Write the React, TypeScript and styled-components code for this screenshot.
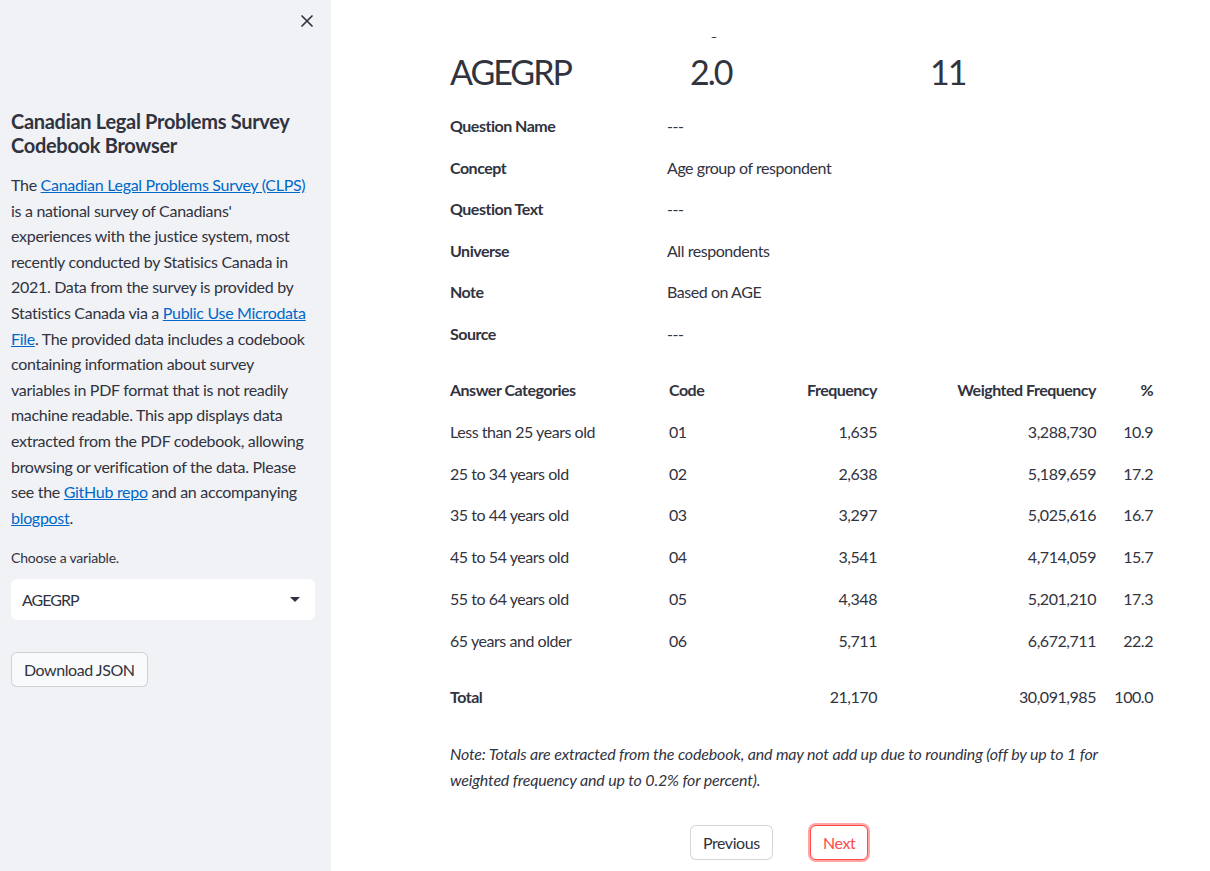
import React from "react";
import styled, { createGlobalStyle } from "styled-components";

const font = `"Lato", "Noto Sans", sans-serif`;

const GlobalStyle = createGlobalStyle`
  html, body {
    margin: 0;
    padding: 0;
    height: 100%;
    overflow: hidden;
  }
  body {
    font-family: ${font};
    color: #31333f;
    background: #ffffff;
  }
  * { box-sizing: border-box; }
`;

const Page = styled.div`
  display: flex;
  width: 1210px;
  height: 871px;
  overflow: hidden;
`;

const Sidebar = styled.aside`
  width: 331px;
  flex-shrink: 0;
  background: #f0f2f6;
  padding: 0 16px 0 11px;
  display: flex;
  flex-direction: column;
  letter-spacing: -0.3px;
`;

const CloseRow = styled.div`
  height: 42px;
  display: flex;
  align-items: center;
  justify-content: flex-end;
  margin-right: -4px;
`;

const CloseButton = styled.button`
  width: 24px;
  height: 24px;
  border: none;
  background: transparent;
  padding: 0;
  display: flex;
  align-items: center;
  justify-content: center;
  color: #31333f;
  cursor: pointer;
`;

const SideTitle = styled.h2`
  margin: 67px 0 0;
  font-size: 20px;
  line-height: 24px;
  font-weight: 700;
  letter-spacing: -0.3px;
`;

const SideText = styled.p`
  margin: 15px 0 0;
  font-size: 16px;
  line-height: 25.6px;
  white-space: nowrap;
`;

const Link = styled.a`
  color: #0068c9;
  text-decoration: underline;
`;

const FieldLabel = styled.label`
  display: block;
  margin-top: 17px;
  font-size: 14px;
  line-height: 22.4px;
  letter-spacing: -0.2px;
`;

const Select = styled.div`
  margin-top: 9px;
  height: 41px;
  background: #ffffff;
  border-radius: 6px;
  display: flex;
  align-items: center;
  justify-content: space-between;
  padding: 0 8px 0 11px;
  font-size: 16px;
  letter-spacing: -1px;
`;

const Button = styled.button<{ $primary?: boolean; $soft?: boolean }>`
  height: 35px;
  padding: 0 12px;
  font-family: ${font};
  font-size: 16px;
  letter-spacing: -0.45px;
  border-radius: 6px;
  cursor: pointer;
  justify-self: start;
  align-self: flex-start;
  background: ${(p) => (p.$soft ? "#f9fafb" : "#ffffff")};
  color: ${(p) => (p.$primary ? "#ff4b4b" : "#31333f")};
  border: 1px solid ${(p) => (p.$primary ? "#ff4b4b" : "rgba(49, 51, 63, 0.2)")};
  box-shadow: ${(p) => (p.$primary ? "0 0 0 2px rgba(255, 75, 75, 0.5)" : "none")};
`;

const DownloadWrap = styled.div`
  margin-top: 32px;
`;

const Main = styled.main`
  flex: 1;
  display: flex;
  flex-direction: column;
  background: #ffffff;
  overflow: hidden;
`;

const TopBar = styled.header`
  height: 37px;
  flex-shrink: 0;
  background: #ffffff;
`;

const Viewport = styled.div`
  flex: 1;
  overflow: hidden;
  padding: 0 56px 0 119px;
`;

const Content = styled.div`
  width: 704px;
  margin-top: -17px;
  letter-spacing: -0.45px;
`;

const Metrics = styled.div`
  display: grid;
  grid-template-columns: repeat(3, 1fr);
  column-gap: 16px;
`;

const MetricLabel = styled.div`
  font-size: 14px;
  line-height: 22.4px;
`;

const MetricValue = styled.div`
  margin-top: 1px;
  font-size: 34px;
  line-height: 57.6px;
  letter-spacing: -2px;
`;

const InfoGrid = styled.div`
  display: grid;
  grid-template-columns: 201px 1fr;
  column-gap: 16px;
  row-gap: 16px;
  margin-top: 12px;
  font-size: 16px;
  line-height: 25.6px;
`;

const InfoKey = styled.div`
  font-weight: 700;
  letter-spacing: -0.5px;
`;

const Table = styled.div`
  margin-top: 22px;
  display: grid;
  grid-template-columns: 219px 100px 108px 219px 57px;
  font-size: 16px;
`;

const Cell = styled.div<{ $right?: boolean; $bold?: boolean; $gapTop?: boolean }>`
  height: 41.8px;
  display: flex;
  align-items: center;
  justify-content: ${(p) => (p.$right ? "flex-end" : "flex-start")};
  font-weight: ${(p) => (p.$bold ? 700 : 400)};
  letter-spacing: ${(p) => (p.$bold ? "-0.5px" : "-0.45px")};
  margin-top: ${(p) => (p.$gapTop ? "14px" : "0")};
`;

const Note = styled.p`
  margin: 24px 0 0;
  font-size: 16px;
  line-height: 26px;
  font-style: italic;
  letter-spacing: -0.17px;
`;

const Pager = styled.div`
  margin-top: 32px;
  display: grid;
  grid-template-columns: repeat(6, 1fr);
  column-gap: 16px;
`;

const Caret = () => (
  <svg width="24" height="24" viewBox="0 0 24 24">
    <path d="M7 10l5 5 5-5z" fill="#31333f" />
  </svg>
);

const CloseIcon = () => (
  <svg width="14" height="14" viewBox="0 0 14 14">
    <path d="M2 2L12 12M12 2L2 12" stroke="#31333f" strokeWidth="1.7" strokeLinecap="round" />
  </svg>
);

const info: [string, string][] = [
  ["Question Name", "---"],
  ["Concept", "Age group of respondent"],
  ["Question Text", "---"],
  ["Universe", "All respondents"],
  ["Note", "Based on AGE"],
  ["Source", "---"],
];

const rows: [string, string, string, string, string][] = [
  ["Less than 25 years old", "01", "1,635", "3,288,730", "10.9"],
  ["25 to 34 years old", "02", "2,638", "5,189,659", "17.2"],
  ["35 to 44 years old", "03", "3,297", "5,025,616", "16.7"],
  ["45 to 54 years old", "04", "3,541", "4,714,059", "15.7"],
  ["55 to 64 years old", "05", "4,348", "5,201,210", "17.3"],
  ["65 years and older", "06", "5,711", "6,672,711", "22.2"],
];

export default function App() {
  return (
    <>
      <GlobalStyle />
      <Page>
        <Sidebar>
          <CloseRow>
            <CloseButton aria-label="Close sidebar">
              <CloseIcon />
            </CloseButton>
          </CloseRow>
          <SideTitle>Canadian Legal Problems Survey Codebook Browser</SideTitle>
          <SideText>
            The <Link href="#">Canadian Legal Problems Survey (CLPS)</Link>
            <br />
            is a national survey of Canadians'
            <br />
            experiences with the justice system, most
            <br />
            recently conducted by Statisics Canada in
            <br />
            2021. Data from the survey is provided by
            <br />
            Statistics Canada via a <Link href="#">Public Use Microdata</Link>
            <br />
            <Link href="#">File</Link>. The provided data includes a codebook
            <br />
            containing information about survey
            <br />
            variables in PDF format that is not readily
            <br />
            machine readable. This app displays data
            <br />
            extracted from the PDF codebook, allowing
            <br />
            browsing or verification of the data. Please
            <br />
            see the <Link href="#">GitHub repo</Link> and an accompanying
            <br />
            <Link href="#">blogpost</Link>.
          </SideText>
          <FieldLabel>Choose a variable.</FieldLabel>
          <Select>
            <span>AGEGRP</span>
            <Caret />
          </Select>
          <DownloadWrap>
            <Button $soft>Download JSON</Button>
          </DownloadWrap>
        </Sidebar>
        <Main>
          <TopBar />
          <Viewport>
            <Content>
              <Metrics>
                <div>
                  <MetricLabel>Variable</MetricLabel>
                  <MetricValue>AGEGRP</MetricValue>
                </div>
                <div>
                  <MetricLabel>Length</MetricLabel>
                  <MetricValue>2.0</MetricValue>
                </div>
                <div>
                  <MetricLabel>Position</MetricLabel>
                  <MetricValue>11</MetricValue>
                </div>
              </Metrics>
              <InfoGrid>
                {info.map(([k, v]) => (
                  <React.Fragment key={k}>
                    <InfoKey>{k}</InfoKey>
                    <div>{v}</div>
                  </React.Fragment>
                ))}
              </InfoGrid>
              <Table>
                <Cell $bold>Answer Categories</Cell>
                <Cell $bold>Code</Cell>
                <Cell $bold $right>Frequency</Cell>
                <Cell $bold $right>Weighted Frequency</Cell>
                <Cell $bold $right>%</Cell>
                {rows.map((r) => (
                  <React.Fragment key={r[1]}>
                    <Cell>{r[0]}</Cell>
                    <Cell>{r[1]}</Cell>
                    <Cell $right>{r[2]}</Cell>
                    <Cell $right>{r[3]}</Cell>
                    <Cell $right>{r[4]}</Cell>
                  </React.Fragment>
                ))}
                <Cell $bold $gapTop>Total</Cell>
                <Cell $gapTop></Cell>
                <Cell $right $gapTop>21,170</Cell>
                <Cell $right $gapTop>30,091,985</Cell>
                <Cell $right $gapTop>100.0</Cell>
              </Table>
              <Note>
                Note: Totals are extracted from the codebook, and may not add up due to rounding (off
                by up to 1 for weighted frequency and up to 0.2% for percent).
              </Note>
              <Pager>
                <span />
                <span />
                <Button>Previous</Button>
                <Button $primary>Next</Button>
              </Pager>
            </Content>
          </Viewport>
        </Main>
      </Page>
    </>
  );
}
